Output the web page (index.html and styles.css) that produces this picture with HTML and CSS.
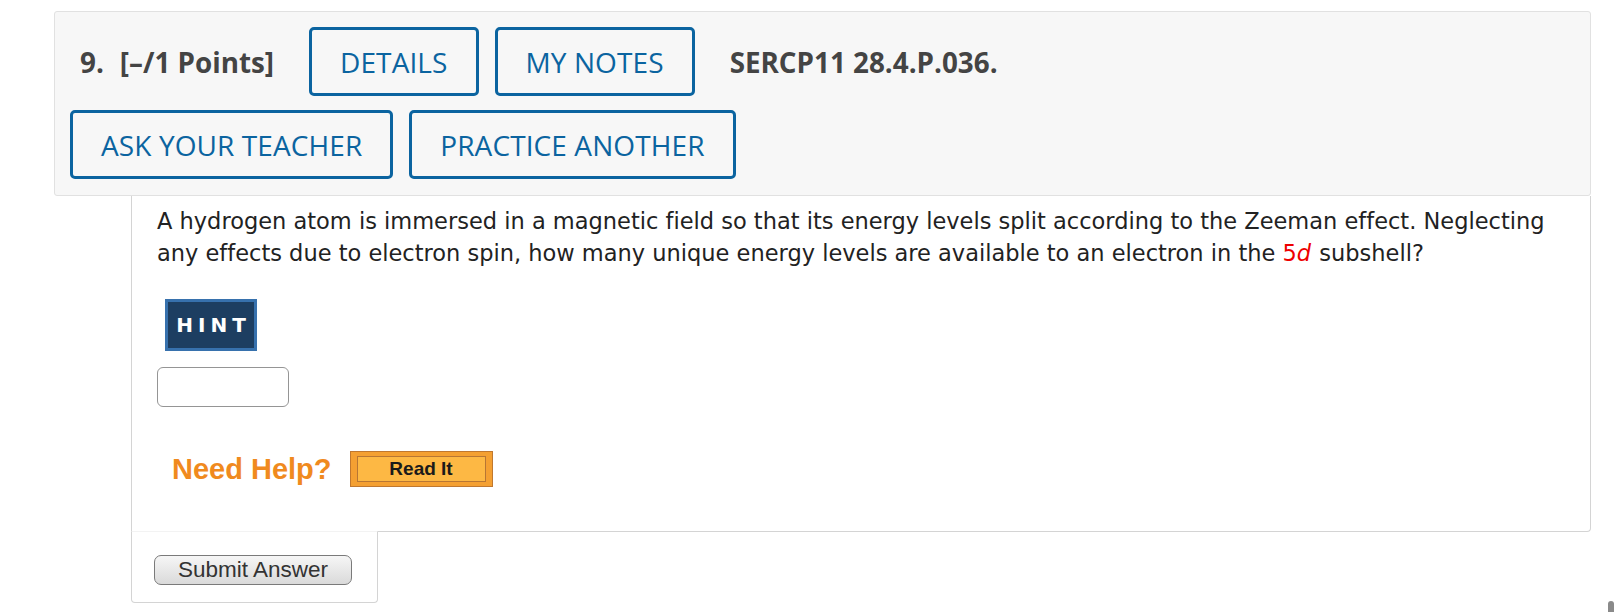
FILE: index.html
```html
<!DOCTYPE html>
<html lang="en">
<head>
<meta charset="utf-8">
<title>Question 9</title>
<link rel="stylesheet" href="styles.css">
</head>
<body>
<div class="question">
  <div class="q-header">
    <div class="q-row">
      <h2 class="q-title"><span class="q-num">9.</span>[–/1 Points]</h2>
      <button class="q-btn" type="button">DETAILS</button>
      <button class="q-btn" type="button">MY NOTES</button>
      <span class="q-code">SERCP11 28.4.P.036.</span>
    </div>
    <div class="q-row">
      <button class="q-btn" type="button">ASK YOUR TEACHER</button>
      <button class="q-btn" type="button">PRACTICE ANOTHER</button>
    </div>
  </div>
  <div class="q-body">
    <p class="q-text">A hydrogen atom is immersed in a magnetic field so that its energy levels split according to the Zeeman effect. Neglecting any effects due to electron spin, how many unique energy levels are available to an electron in the <span class="var">5<i>d</i></span> subshell?</p>
    <button class="hint" type="button">HINT</button>
    <input class="answer" type="text" aria-label="answer">
    <div class="help">
      <span class="help-label">Need Help?</span>
      <button class="read-it" type="button"><span class="read-it-inner">Read It</span></button>
    </div>
  </div>
  <div class="q-submit">
    <button class="submit" type="button">Submit Answer</button>
  </div>
</div>
<div class="scroll-thumb"></div>
</body>
</html>
```
FILE: styles.css
```css
html, body {
  margin: 0;
  padding: 0;
  background: #ffffff;
}

body {
  font-family: "DejaVu Sans", Verdana, sans-serif;
  color: #222222;
}

.question {
  margin: 11px 0 0 54px;
  width: 1537px;
}

.q-header {
  box-sizing: border-box;
  background: #f7f7f7;
  border: 1px solid #e1e1e1;
  border-radius: 3px;
  padding: 15px 15px 16px 15px;
  display: flex;
  flex-direction: column;
  gap: 14px;
}

.q-row {
  display: flex;
  align-items: center;
  gap: 16px;
}

.q-title {
  margin: 0 19px 0 10px;
  font-family: "Open Sans", sans-serif;
  font-weight: 700;
  font-size: 27.8px;
  color: #444444;
  white-space: nowrap;
}

.q-num {
  margin-right: 16px;
}

.q-code {
  margin-left: 19px;
  font-family: "Open Sans", sans-serif;
  font-weight: 700;
  font-size: 27.8px;
  color: #444444;
  white-space: nowrap;
}

.q-btn {
  box-sizing: border-box;
  height: 69px;
  padding: 0 28px;
  border: 3px solid #0b64a0;
  border-radius: 5px;
  background: transparent;
  color: #0b64a0;
  font-family: "Open Sans", sans-serif;
  font-weight: 500;
  font-size: 28px;
  letter-spacing: 0.1px;
  white-space: nowrap;
  cursor: pointer;
}

.q-body {
  margin-left: 77px;
  background: #ffffff;
  border: 1px solid #d4d4d4;
  border-top: none;
  border-radius: 0 0 4px 0;
  padding: 9px 25px 44px 25px;
}

.q-text {
  margin: 0;
  font-family: "DejaVu Sans", Verdana, sans-serif;
  font-size: 22.5px;
  line-height: 32px;
  color: #222222;
  font-variant-ligatures: none;
}

.var {
  color: #ee0000;
}

.var i {
  padding-right: 1px;
}

.hint {
  display: flex;
  align-items: center;
  justify-content: center;
  box-sizing: border-box;
  width: 92px;
  height: 52px;
  margin: 30px 0 0 8px;
  padding: 0 0 0 5px;
  border: 3px solid #3771ad;
  background: #1d3e61;
  color: #ffffff;
  font-family: "DejaVu Sans", Verdana, sans-serif;
  font-weight: 700;
  font-size: 20px;
  letter-spacing: 5px;
}

.answer {
  display: block;
  box-sizing: border-box;
  width: 132px;
  height: 40px;
  margin-top: 16px;
  border: 1px solid #959595;
  border-radius: 6px;
  background: #ffffff;
}

.help {
  display: flex;
  align-items: center;
  margin: 44px 0 0 15px;
  gap: 18px;
}

.help-label {
  font-family: "Liberation Sans", Arial, sans-serif;
  font-weight: 700;
  font-size: 29px;
  color: #f08a1e;
}

.read-it {
  box-sizing: border-box;
  width: 143px;
  height: 36px;
  padding: 4px 6px;
  border: 1px solid #c0782f;
  background: #f4a032;
  cursor: pointer;
}

.read-it-inner {
  display: flex;
  align-items: center;
  justify-content: center;
  box-sizing: border-box;
  height: 100%;
  border: 1px solid #b77634;
  background: #fdb844;
  font-family: "Liberation Sans", Arial, sans-serif;
  font-weight: 700;
  font-size: 19px;
  color: #1a1a1a;
}

.q-submit {
  position: relative;
  box-sizing: border-box;
  width: 247px;
  margin: -1px 0 0 77px;
  padding: 23px 0 17px 22px;
  background: #ffffff;
  border: 1px solid #d4d4d4;
  border-top-color: #f3f3f3;
  border-radius: 0 0 4px 4px;
}

.submit {
  display: block;
  box-sizing: border-box;
  width: 198px;
  height: 30px;
  padding: 0;
  border: 1px solid #7a7a7a;
  border-radius: 7px;
  background: linear-gradient(#f6f6f6, #dadada);
  font-family: "Liberation Sans", Arial, sans-serif;
  font-size: 22.5px;
  line-height: 28px;
  color: #333333;
  cursor: pointer;
}

.scroll-thumb {
  position: absolute;
  left: 1608px;
  top: 601px;
  width: 6px;
  height: 11px;
  border-radius: 3px 3px 0 0;
  background: #8a8a8a;
}
```
